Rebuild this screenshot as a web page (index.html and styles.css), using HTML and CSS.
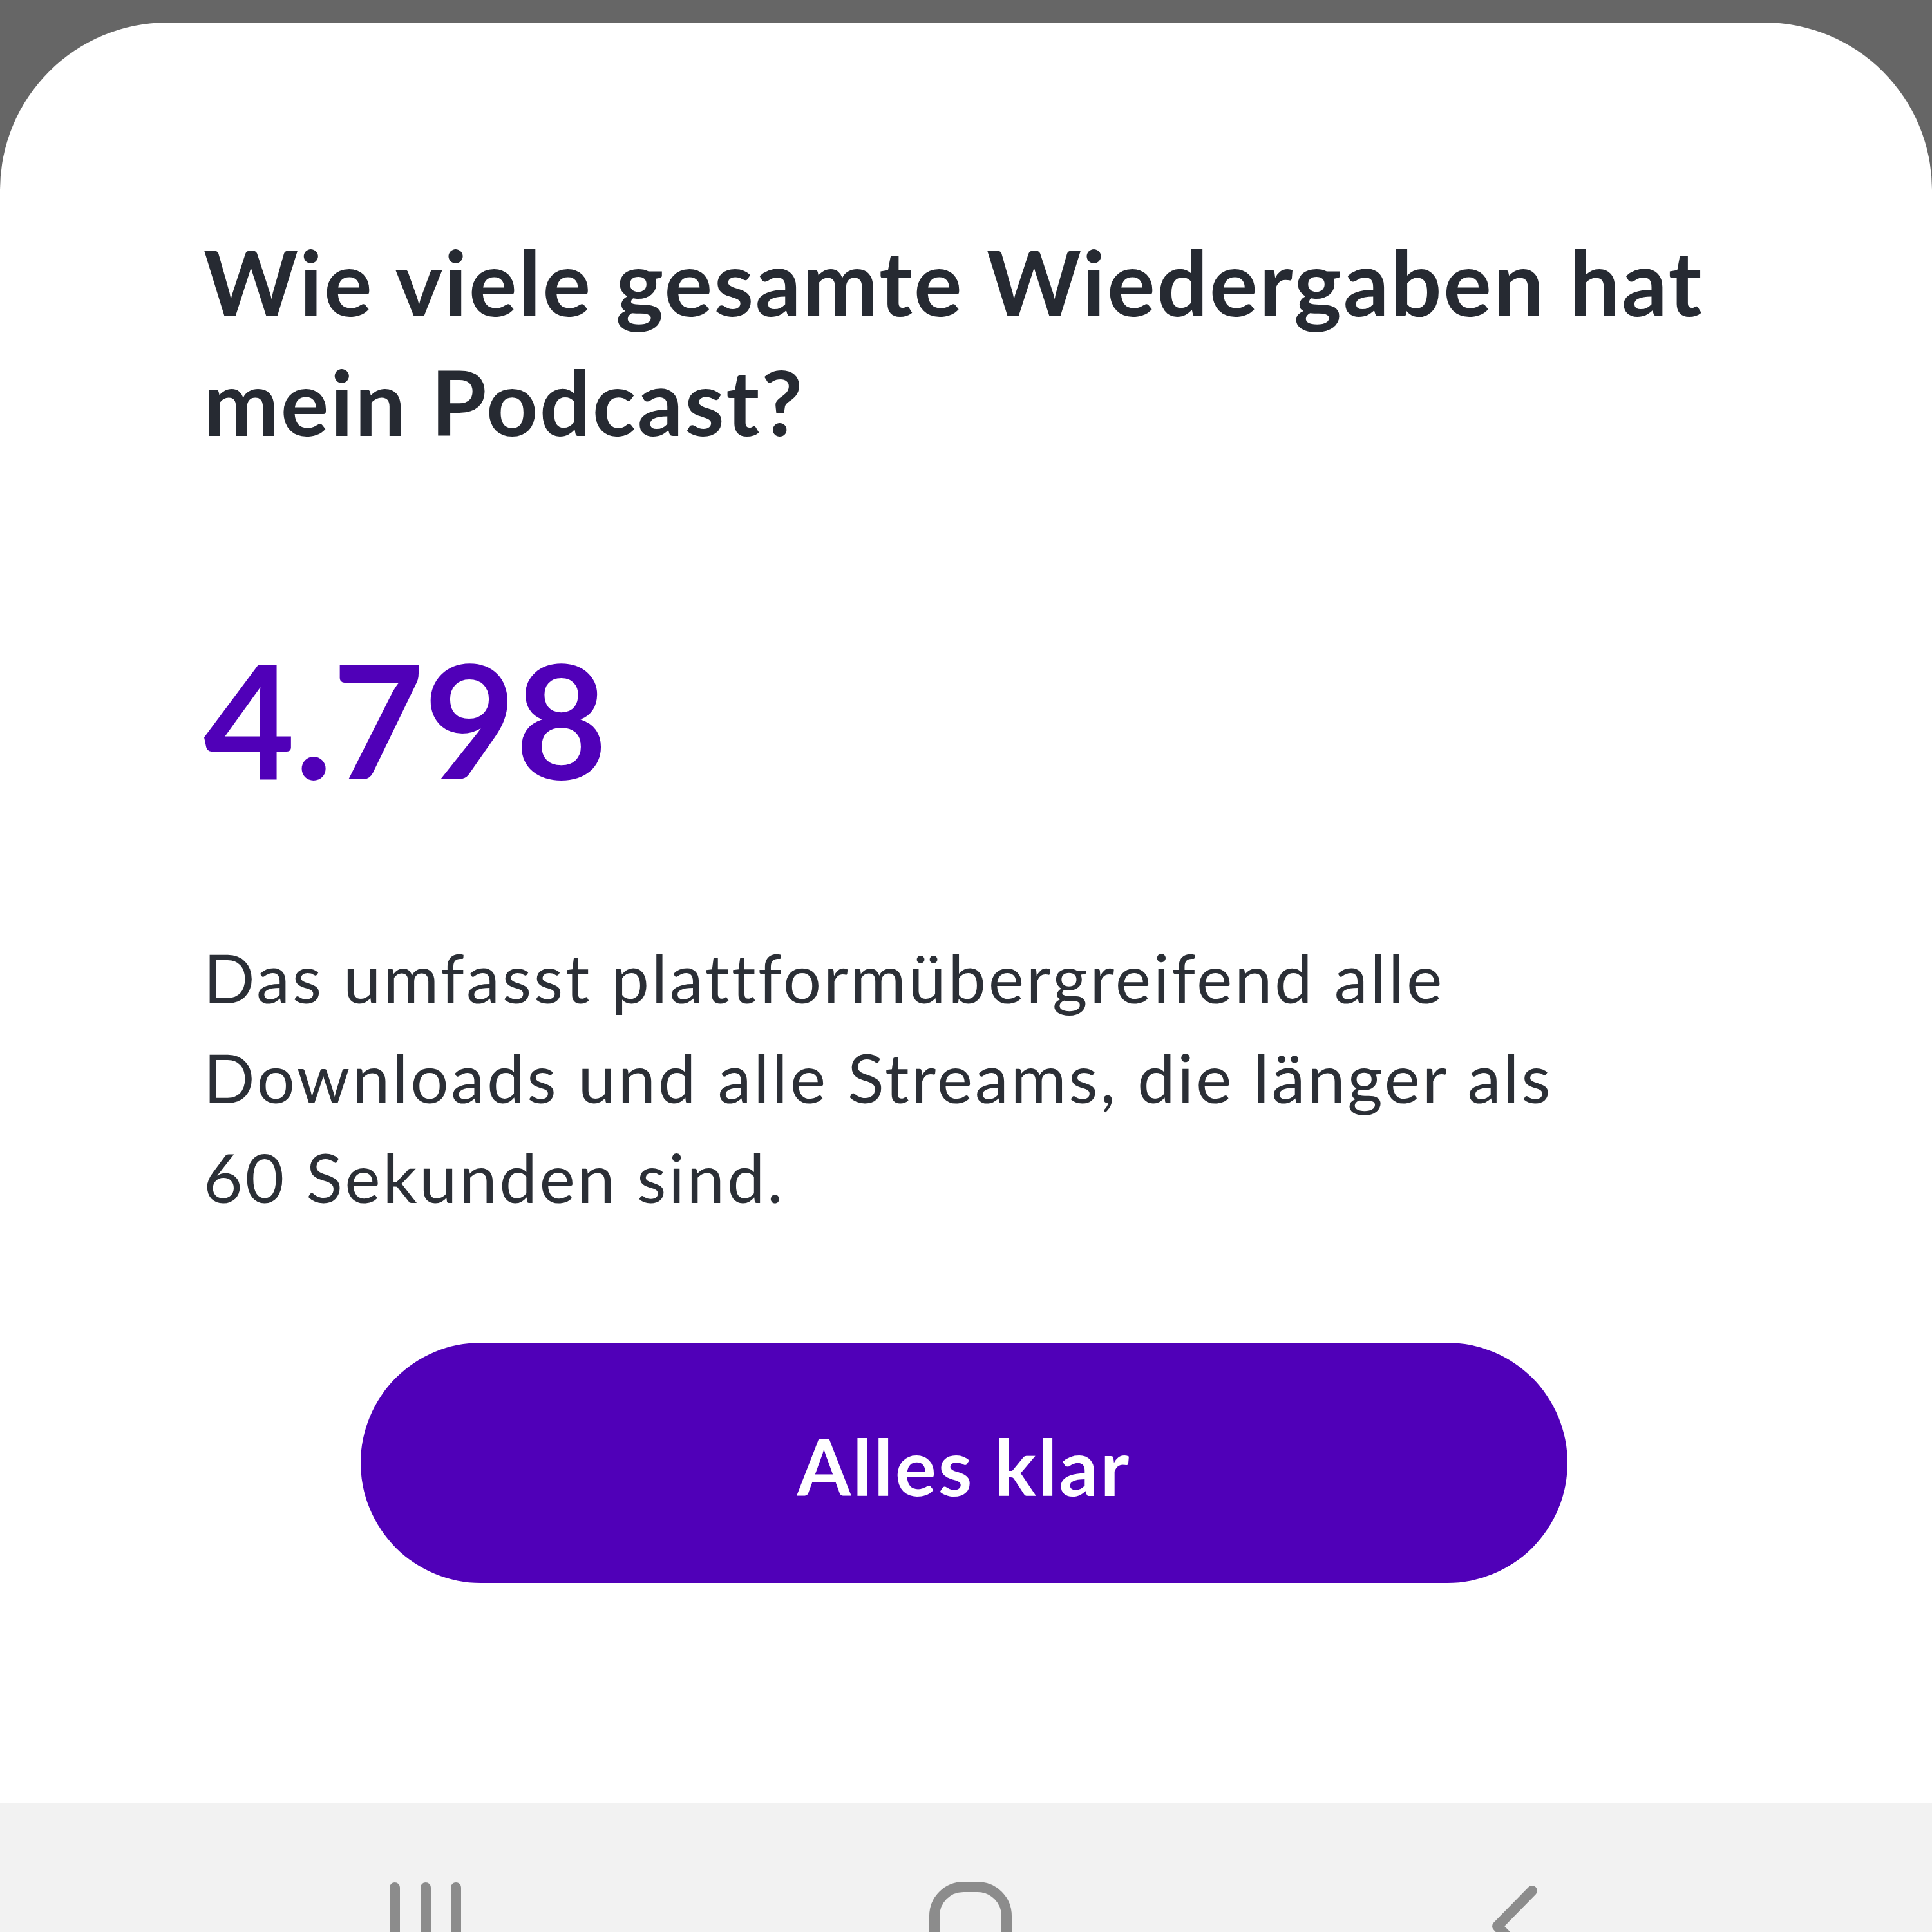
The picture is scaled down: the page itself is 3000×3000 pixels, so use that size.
FILE: index.html
```html
<!DOCTYPE html>
<html lang="de">
<head>
<meta charset="utf-8">
<title>Wiedergaben</title>
<link rel="stylesheet" href="styles.css">
</head>
<body>
<div class="screen">
  <div class="statusbar"></div>
  <main class="sheet">
    <h1 class="title">Wie viele gesamte Wiedergaben hat mein Podcast?</h1>
    <div class="value">4.798</div>
    <p class="desc">Das umfasst plattformübergreifend alle Downloads und alle Streams, die länger als 60 Sekunden sind.</p>
    <div class="actions">
      <button class="btn">Alles klar</button>
    </div>
  </main>
  <nav class="navbar">
    <svg class="nav-icon recents" viewBox="0 0 120 120" width="120" height="120">
      <path d="M11 8 V120 M59 8 V120 M106 8 V120" stroke="#8c8c8c" stroke-width="16" stroke-linecap="round" fill="none"/>
    </svg>
    <svg class="nav-icon home" viewBox="0 0 130 120" width="130" height="120">
      <path d="M9 120 V56 A45 45 0 0 1 54 11 H76 A45 45 0 0 1 121 56 V120" stroke="#8c8c8c" stroke-width="16" fill="none"/>
    </svg>
    <svg class="nav-icon back" viewBox="0 0 80 120" width="80" height="120">
      <path d="M66 13 L12 68 L66 123" stroke="#8c8c8c" stroke-width="16" stroke-linecap="round" stroke-linejoin="round" fill="none"/>
    </svg>
  </nav>
</div>
</body>
</html>
```
FILE: styles.css
```css
* { box-sizing: border-box; }
html, body { margin: 0; padding: 0; }
body { background: #666666; width: 3000px; height: 3000px; overflow: hidden; }
.screen { width: 3000px; height: 3000px; display: flex; flex-direction: column; background: #666666; }
.statusbar { height: 35px; flex: none; background: #666666; }
.sheet {
  flex: 1;
  background: #ffffff;
  border-radius: 260px 260px 0 0;
  padding: 0 280px 0 316px;
  display: flex;
  flex-direction: column;
}
.title {
  margin: 309px 0 0 0;
  font-family: "Lato", "Liberation Sans", sans-serif;
  font-weight: 700;
  font-size: 140px;
  line-height: 186px;
  color: #262a32;
  letter-spacing: 2.5px;
}
.value {
  margin-top: 277px;
  font-family: "Lato", "Liberation Sans", sans-serif;
  font-weight: 700;
  font-size: 245px;
  line-height: 245px;
  color: #5000b8;
}
.desc {
  margin: 202px 0 0 0;
  max-width: 2250px;
  font-family: "Lato", "Liberation Sans", sans-serif;
  font-weight: 400;
  font-size: 105px;
  line-height: 155px;
  color: #2b2f36;
  letter-spacing: 3.5px;
}
.actions { margin-top: 180px; padding-left: 244px; }
.btn {
  width: 1874px;
  height: 373px;
  border: 0;
  border-radius: 187px;
  background: #5000b8;
  color: #ffffff;
  font-family: "Lato", "Liberation Sans", sans-serif;
  font-weight: 700;
  font-size: 120px;
  letter-spacing: 3px;
  padding-top: 12px;
}
.navbar {
  height: 201px;
  flex: none;
  background: #f2f2f2;
  display: flex;
  align-items: flex-start;
  padding-top: 124px;
  overflow: hidden;
}
.nav-icon { display: block; }
.recents { margin-left: 602px; }
.home { margin-left: 720px; margin-top: -4px; }
.back { margin-left: 741px; }
```
